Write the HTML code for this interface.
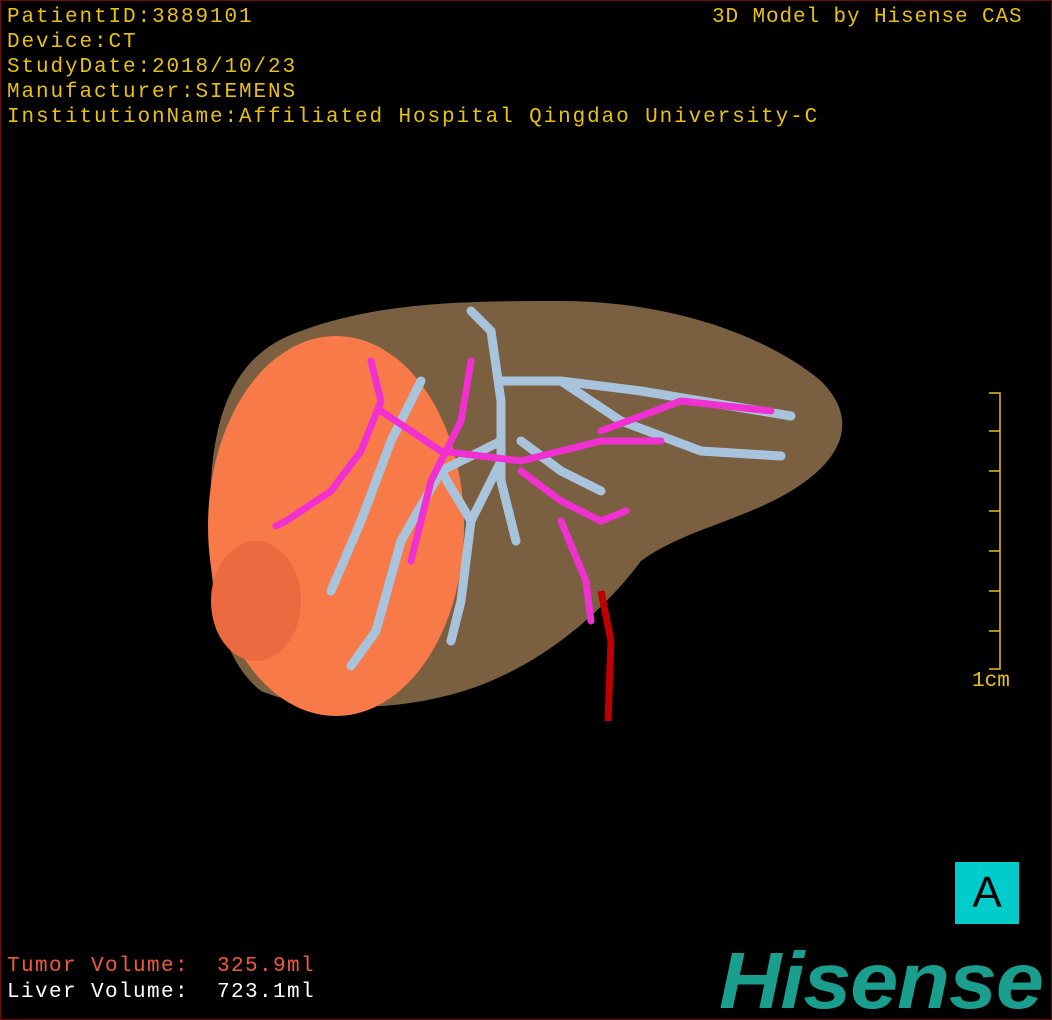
<!DOCTYPE html><html><head><style>
html,body{margin:0;padding:0;background:#000}
#c{position:relative;width:1050px;height:1018px;border:1px solid #6a0f0f;background:#000;overflow:hidden;font-family:"Liberation Sans",sans-serif}
.t{position:absolute;left:6px;color:#e8c010;font-family:"Liberation Mono",monospace;font-size:21px;letter-spacing:1.9px;line-height:25px;white-space:pre}
</style></head><body><div id="c">
<div class="t" style="top:4px">PatientID:3889101
Device:CT
StudyDate:2018/10/23
Manufacturer:SIEMENS
InstitutionName:Affiliated Hospital Qingdao University-C</div>
<div class="t" style="left:711px;top:4px;letter-spacing:0.9px">3D Model by Hisense CAS</div>
<svg width="1052" height="1020" style="position:absolute;left:0;top:0">
<path d="M300 330 C380 300 470 300 560 300 C660 300 760 330 820 380 C860 420 840 460 790 490 C740 520 680 530 640 560 C610 600 560 650 490 680 C420 710 320 715 260 690 C210 650 205 560 210 480 C215 400 240 350 300 330Z" fill="#7a6040"/>
<ellipse cx="335" cy="525" rx="128" ry="190" fill="#f77a48"/>
<ellipse cx="255" cy="600" rx="45" ry="60" fill="#ec6a40"/>
<g stroke="#a8c4dc" stroke-width="9" fill="none" stroke-linecap="round">
<path d="M470 310 L490 330 L500 400 L500 480 L515 540"/>
<path d="M500 380 L560 380 L640 390 L790 415"/>
<path d="M560 380 L620 420 L700 450 L780 455"/>
<path d="M500 440 L440 470 L400 540 L375 630 L350 665"/>
<path d="M420 380 L390 440 L360 520 L330 590"/>
<path d="M500 460 L470 520 L460 600 L450 640"/>
<path d="M520 440 L560 470 L600 490"/>
<path d="M440 470 L470 520"/>
</g>
<g stroke="#f030d0" stroke-width="7" fill="none" stroke-linecap="round">
<path d="M370 360 L380 400 L360 450 L330 490 L285 520 L275 525"/>
<path d="M380 410 L440 450 L520 460 L600 440 L660 440"/>
<path d="M600 430 L680 400 L770 410"/>
<path d="M470 360 L460 420 L430 480 L410 560"/>
<path d="M520 470 L560 500 L600 520 L625 510"/>
<path d="M560 520 L585 580 L590 620"/>
</g>
<path d="M600 590 L610 640 L607 720" stroke="#c00000" stroke-width="7" fill="none"/>
<g stroke="#e8c010" stroke-width="1.5" fill="none">
<path d="M988 392 H999 V668 H988"/>
<path d="M988 430H999M988 470H999M988 510H999M988 550H999M988 590H999M988 630H999"/>
</g>
</svg>
<div class="t" style="left:971px;top:668px;letter-spacing:0">1cm</div>
<div class="t" style="top:953px;color:#f05a3c;letter-spacing:1.4px">Tumor Volume:  325.9ml</div>
<div class="t" style="top:979px;color:#fff;letter-spacing:1.4px">Liver Volume:  723.1ml</div>
<div style="position:absolute;left:954px;top:861px;width:64px;height:62px;background:#00cccc;color:#000;font-size:44px;text-align:center;line-height:62px">A</div>
<div style="position:absolute;left:718px;top:935px;color:#1a9e8e;font-size:80px;font-weight:bold;font-style:italic;letter-spacing:-1px;line-height:90px;transform:scaleX(1.08);transform-origin:left">Hisense</div>
</div></body></html>
